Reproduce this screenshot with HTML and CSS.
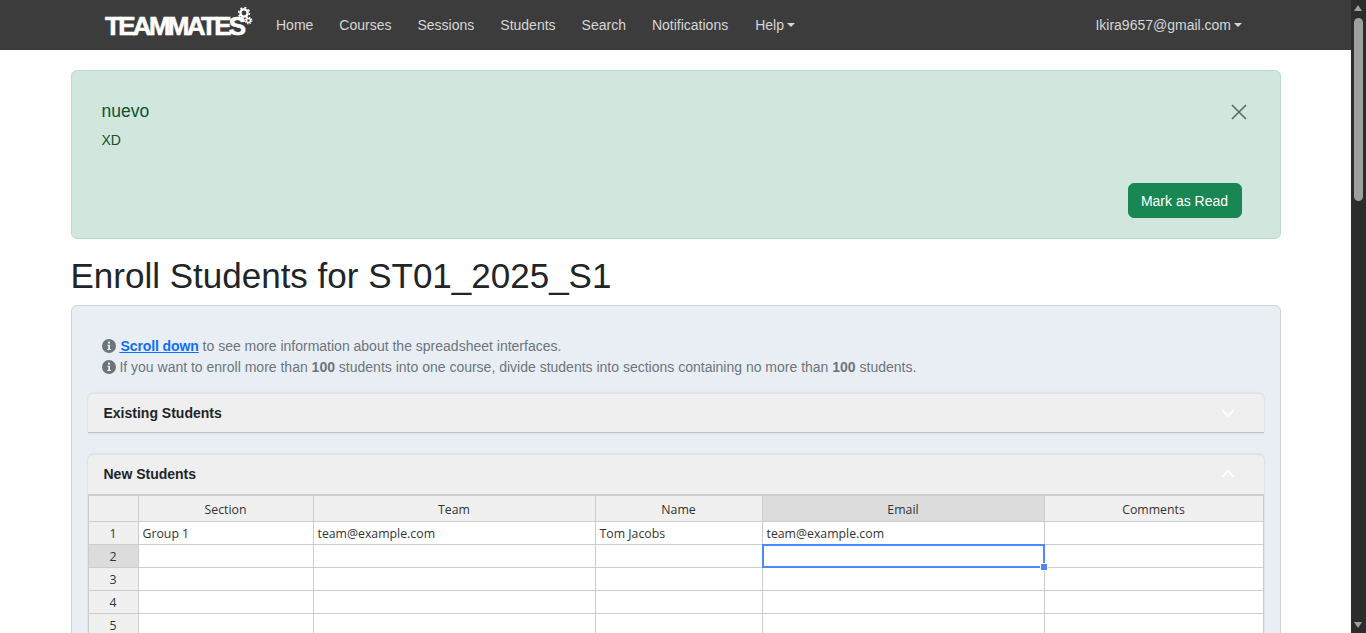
FILE: index.html
```html
<!DOCTYPE html>
<html lang="en">
<head>
    <meta charset="UTF-8">
    <meta name="viewport" content="width=device-width, initial-scale=1.0">
    <title>Enroll Students</title>
    <link rel="stylesheet" href="styles.css">
</head>
<body>
    <nav class="navbar">
        <a class="logo" href="#">
            <span class="logo-text">TEAMMATES</span>
            <svg class="logo-gears" width="20" height="26" viewBox="0 0 20 26">
                <g fill="none" stroke="#fff">
                    <circle cx="8" cy="8" r="3.6" stroke-width="2.4"/>
                    <circle cx="8" cy="8" r="5.4" stroke-width="1.6" stroke-dasharray="2 2.2"/>
                    <circle cx="12.5" cy="15.5" r="2" stroke-width="1.4"/>
                    <circle cx="12.5" cy="15.5" r="3.3" stroke-width="1.2" stroke-dasharray="1.4 1.2"/>
                </g>
            </svg>
        </a>
        <ul class="nav-links">
            <li><a href="#">Home</a></li>
            <li><a href="#">Courses</a></li>
            <li><a href="#">Sessions</a></li>
            <li><a href="#">Students</a></li>
            <li><a href="#">Search</a></li>
            <li><a href="#">Notifications</a></li>
            <li class="nav-help"><a href="#" class="caret">Help</a></li>
        </ul>
        <a href="#" class="caret user">Ikira9657@gmail.com</a>
    </nav>

    <div class="container">
        <div class="notice">
            <div class="notice-top">
                <div>
                    <h5 class="notice-title">nuevo</h5>
                    <p class="notice-body">XD</p>
                </div>
                <svg class="notice-close" width="16" height="16" viewBox="0 0 16 16">
                    <path d="M1 1L15 15M15 1L1 15" stroke="#5c6a64" stroke-width="1.6" fill="none"/>
                </svg>
            </div>
            <div class="notice-actions">
                <button type="button" class="btn-read">Mark as Read</button>
            </div>
        </div>

        <h1 class="page-title">Enroll Students for ST01_2025_S1</h1>

        <div class="enroll-card">
            <p class="info-line">
                <svg class="info-icon" width="14" height="14" viewBox="0 0 14 14">
                    <circle cx="7" cy="7" r="7" fill="#6c757d"/>
                    <rect x="6" y="2.6" width="2" height="2" fill="#e9eef5"/>
                    <path d="M5.4 5.8H8V10H9V11H5.2V10H6.2V6.8H5.4Z" fill="#e9eef5"/>
                </svg>
                <a href="#" class="scroll-link">&#8202;Scroll down</a> to see more information about the spreadsheet interfaces.
            </p>
            <p class="info-line">
                <svg class="info-icon" width="14" height="14" viewBox="0 0 14 14">
                    <circle cx="7" cy="7" r="7" fill="#6c757d"/>
                    <rect x="6" y="2.6" width="2" height="2" fill="#e9eef5"/>
                    <path d="M5.4 5.8H8V10H9V11H5.2V10H6.2V6.8H5.4Z" fill="#e9eef5"/>
                </svg>
                If you want to enroll more than <b>100</b> students into one course, divide students into sections containing no more than <b>100</b> students.
            </p>

            <div class="panel panel-closed">
                <div class="panel-head">
                    <span>Existing Students</span>
                    <svg width="16" height="10" viewBox="0 0 16 10"><path d="M2 2L8 8L14 2" stroke="#fff" stroke-width="2" fill="none"/></svg>
                </div>
            </div>

            <div class="panel">
                <div class="panel-head">
                    <span>New Students</span>
                    <svg width="16" height="10" viewBox="0 0 16 10"><path d="M2 8L8 2L14 8" stroke="#fff" stroke-width="2" fill="none"/></svg>
                </div>
                <table class="sheet">
                    <colgroup>
                        <col class="col-row">
                        <col class="col-section">
                        <col class="col-team">
                        <col class="col-name">
                        <col class="col-email">
                        <col class="col-comments">
                    </colgroup>
                    <thead>
                        <tr>
                            <th></th>
                            <th>Section</th>
                            <th>Team</th>
                            <th>Name</th>
                            <th class="active-head">Email</th>
                            <th>Comments</th>
                        </tr>
                    </thead>
                    <tbody>
                        <tr>
                            <th>1</th>
                            <td>Group 1</td>
                            <td>team@example.com</td>
                            <td>Tom Jacobs</td>
                            <td>team@example.com</td>
                            <td></td>
                        </tr>
                        <tr>
                            <th class="active-head">2</th>
                            <td></td>
                            <td></td>
                            <td></td>
                            <td class="selected"><span class="fill-handle"></span></td>
                            <td></td>
                        </tr>
                        <tr><th>3</th><td></td><td></td><td></td><td></td><td></td></tr>
                        <tr><th>4</th><td></td><td></td><td></td><td></td><td></td></tr>
                        <tr><th>5</th><td></td><td></td><td></td><td></td><td></td></tr>
                    </tbody>
                </table>
            </div>
        </div>
    </div>

    <!-- window scrollbar -->
    <div class="scrollbar">
        <span class="arrow-up"></span>
        <span class="thumb"></span>
        <span class="arrow-down"></span>
    </div>
</body>
</html>
```

FILE: styles.css
```css
html, body {
    height: 100%;
    overflow: hidden;
}

body {
    font-family: "Liberation Sans", Arial, sans-serif;
    font-size: 14px;
    color: #212529;
    background-color: #ffffff;
    margin: 0;
    padding: 0 15px 0 0;
    box-sizing: border-box;
}

a {
    text-decoration: none;
}

.navbar {
    display: flex;
    align-items: center;
    height: 50px;
    padding: 0 109px 0 105px;
    background-color: #3c3c3c;
}

.logo {
    display: flex;
    width: 171px;
    height: 50px;
    position: relative;
}

.logo-text {
    margin-top: 11px;
    font-size: 26px;
    line-height: 30px;
    font-weight: bold;
    letter-spacing: -2.7px;
    color: #ffffff;
    -webkit-text-stroke: 0.6px #ffffff;
}

.logo-gears {
    position: absolute;
    left: 131px;
    top: 5px;
}

.nav-links {
    display: flex;
    flex: 1;
    gap: 26px;
    margin: 0;
    padding: 0;
    list-style: none;
}

.nav-links a, .user {
    color: #d6d6d6;
}

.nav-help {
    margin-left: 1px;
}

.caret::after {
    content: "";
    display: inline-block;
    margin-left: 3px;
    vertical-align: 3px;
    border-top: 4px solid #d6d6d6;
    border-left: 4px solid transparent;
    border-right: 4px solid transparent;
}

.container {
    width: 1210px;
    margin: 20px auto 0;
}

.notice {
    box-sizing: border-box;
    height: 169px;
    padding: 29px 38px 20px 30px;
    display: flex;
    flex-direction: column;
    justify-content: space-between;
    background-color: #d1e7dd;
    border: 1px solid #badbcc;
    border-radius: 6px;
    color: #0f5132;
}

.notice-top {
    display: flex;
    justify-content: space-between;
    align-items: flex-start;
}

.notice-title {
    margin: 0 0 10px;
    font-size: 17.5px;
    line-height: 22px;
    font-weight: normal;
}

.notice-body {
    margin: 0;
    font-size: 14px;
    line-height: 17px;
}

.notice-close {
    margin: 4px -5px 0 0;
}

.notice-actions {
    display: flex;
    justify-content: flex-end;
}

.btn-read {
    height: 35px;
    width: 114px;
    padding: 0;
    border: 1px solid #198754;
    border-radius: 6px;
    background-color: #198754;
    color: #ffffff;
    font-family: inherit;
    font-size: 14px;
}

.page-title {
    margin: 16px 0 9px;
    font-size: 35px;
    line-height: 41px;
    font-weight: normal;
}

.enroll-card {
    box-sizing: border-box;
    height: 400px;
    padding: 30px 16px 0;
    background-color: #e9eef5;
    border: 1px solid #d2d2d2;
    border-radius: 6px;
}

.info-line {
    margin: 0 0 0 14px;
    line-height: 21px;
    color: #6c757d;
}

.info-icon {
    vertical-align: -2px;
}

.scroll-link {
    color: #0d6efd;
    font-weight: bold;
    letter-spacing: -0.1px;
    text-decoration: underline;
}

.panel {
    margin-top: 21px;
    background-color: #efefef;
    border-top: 1px solid #e2e2e2;
    border-radius: 6px 6px 0 0;
    box-shadow: 0 0 2px rgba(0, 0, 0, 0.15);
}

.info-line + .panel {
    margin-top: 15px;
}

.panel-closed {
    border-bottom: 1px solid #c4c4c4;
}

.panel-head {
    display: flex;
    justify-content: space-between;
    align-items: center;
    height: 38px;
    padding: 0 28px 0 16px;
    font-weight: bold;
}

.sheet {
    width: 1176px;
    margin-top: 1px;
    table-layout: fixed;
    border-collapse: collapse;
    border-top: 2px solid #cccccc;
    background-color: #ffffff;
    font-family: "Open Sans", "Noto Sans", sans-serif;
    font-size: 12.3px;
    color: #333333;
}

.col-row { width: 50px; }
.col-section { width: 175px; }
.col-team { width: 282px; }
.col-name { width: 167px; }
.col-email { width: 282px; }
.col-comments { width: 219px; }

.sheet th, .sheet td {
    height: 21px;
    padding: 1px 4px 0;
    border: 1px solid #cccccc;
    line-height: 21px;
    white-space: nowrap;
}

.sheet th {
    font-weight: normal;
    text-align: center;
    background-color: #f0f0f0;
}

.sheet thead th {
    height: 26px;
    padding-top: 3px;
    box-sizing: border-box;
}

.sheet .active-head {
    background-color: #dcdcdc;
}

.selected {
    position: relative;
}

.selected::after {
    content: "";
    position: absolute;
    top: -1px;
    left: -1px;
    right: -1px;
    bottom: -1px;
    border: 2px solid #4b89ff;
}

.fill-handle {
    position: absolute;
    z-index: 1;
    right: -4px;
    bottom: -4px;
    width: 6px;
    height: 6px;
    background-color: #4b89ff;
    border: 1px solid #ffffff;
}

.scrollbar {
    position: fixed;
    top: 0;
    right: 0;
    bottom: 0;
    width: 15px;
    background-color: #2c2c2c;
}

.arrow-up, .arrow-down {
    position: absolute;
    left: 3px;
    border-left: 4.5px solid transparent;
    border-right: 4.5px solid transparent;
}

.arrow-up {
    top: 5px;
    border-bottom: 6px solid #a0a0a0;
}

.arrow-down {
    bottom: 5px;
    border-top: 6px solid #a0a0a0;
}

.thumb {
    position: absolute;
    left: 3px;
    top: 18px;
    width: 9px;
    height: 183px;
    border-radius: 5px;
    background-color: #9f9f9f;
}
```
